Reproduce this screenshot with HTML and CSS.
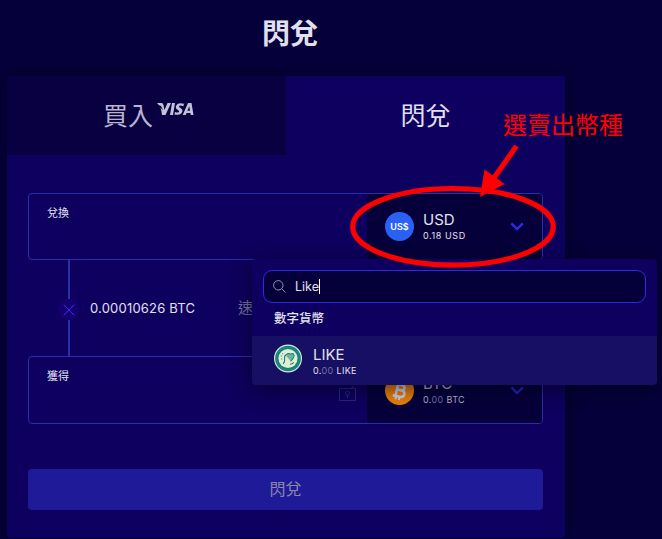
FILE: index.html
```html
<!DOCTYPE html>
<html lang="zh-Hant">
<head>
<meta charset="utf-8">
<title>閃兌</title>
<link rel="stylesheet" href="styles.css">
</head>
<body>
<h1 class="title">閃兌</h1>
<main class="card">
  <nav class="tabs">
    <div class="tab tab-buy"><span>買入</span>
      <svg class="visa" viewBox="0 0 38 14"><path d="M0 1H4.5Q6 1 6.5 3L7.5 8L10.5 1H14L8.5 13H5Q4.5 5 0 1Z"/><path d="M15 1H18L16 13H13Z"/><path d="M27 1.8L26.3 4.2Q22.4 2.7 22 4.5Q22 5.2 23.5 6Q26 7.3 25.3 9.5Q24 14 17.4 12.4L18 10Q21.8 11.3 22.2 9.5Q22.2 8.8 20.5 7.8Q18.3 6.5 19 4.1Q20.5 -.2 27 1.8Z"/><path fill-rule="evenodd" d="M31 1H34.5L36.5 13H33.7L33.4 11H29.6L28.7 13H25.7ZM32.3 4.2L30.4 8.8H33Z"/><path class="notch" d="M0 2.5L4 4L6 8L3.5 6Z"/></svg>
    </div>
    <div class="tab tab-active">閃兌</div>
  </nav>
  <section class="form">
    <div class="field">
      <div class="amount">兌換</div>
      <div class="currency">
        <span class="coin usd">US$</span>
        <div class="names"><b>USD</b><small>0.18 USD</small></div>
        <svg class="chevron" viewBox="0 0 14 9"><path d="M1.3 1.3L7 7L12.7 1.3"/></svg>
      </div>
    </div>
    <div class="rate">
      <div class="link"><i></i><span class="cross"><svg viewBox="0 0 12 12"><path d="M.7.7L11.3 11.3M11.3.7L.7 11.3"/></svg></span><i></i></div>
      <span class="price">0.00010626 BTC</span>
      <span class="speed">速</span>
    </div>
    <div class="field get">
      <div class="amount">獲得
        <svg class="lock" viewBox="0 0 17 17"><path d="M.5 4.5H16.5V16.5H.5ZM13 4V2.5H14V4"/><circle cx="8.5" cy="9.3" r="2"/><path d="M8.5 11.3V14"/></svg>
      </div>
      <div class="currency">
        <svg class="coin" viewBox="0 0 29 29"><circle cx="14.5" cy="14.5" r="14.5" fill="#e97f0a"/><g transform="rotate(13 14.5 14.5)" fill="none" stroke="#d4d2df"><path stroke-width="2.6" d="M9 8.5H15.5C20 8.5 20 14 15.5 14H11.5H16C21.5 14 21.5 20.5 16 20.5H9M11.8 8V21"/><path stroke-width="2" d="M12.5 5V8.5M16 5V8.5M12.5 20.5V24M16 20.5V24"/></g></svg>
        <div class="names"><b>BTC</b><small>0.<em>00</em> BTC</small></div>
        <svg class="chevron" viewBox="0 0 14 9"><path d="M1.3 1.3L7 7L12.7 1.3"/></svg>
      </div>
    </div>
    <div class="submit">閃兌</div>
  </section>
</main>
<aside class="dropdown">
  <div class="search">
    <svg viewBox="0 0 13 13"><circle cx="5.3" cy="5.3" r="4.7"/><path d="M8.8 8.8L12.5 12.5"/></svg>
    <span>Like</span><i class="caret"></i>
  </div>
  <div class="group">數字貨幣</div>
  <div class="option">
    <svg class="coin" viewBox="0 0 29 29"><circle cx="14.5" cy="14.5" r="13.9" fill="#117e80" stroke="#d3e8d0" stroke-width="1.2"/><circle cx="14.5" cy="14.5" r="11.8" fill="none" stroke="#4fa59b" stroke-width=".7" stroke-dasharray="1 1"/><circle cx="14.5" cy="14.5" r="9.9" fill="#e3eed0"/><path d="M13 10.5Q15 8.5 17 10Q19.5 8 20.8 11Q21 14 17.5 17L13 12.5Z" fill="#6fb0a0"/><path d="M9.5 20Q11.5 18 11 14.5Q10.5 11 13 10.3Q15 8.5 17 10Q20 8 20.8 11.2Q21 14 17 17.5M16.5 20.5Q19 20.5 20.5 18.5M7 12H8M8.5 9.5H9.5M7.5 15H8.5" fill="none" stroke="#167f80" stroke-width="1.1"/></svg>
    <div class="names"><b>LIKE</b><small>0.<em>00</em> LIKE</small></div>
  </div>
</aside>
<svg class="marks" viewBox="0 0 662 539"><ellipse cx="453" cy="226.8" rx="100.3" ry="38.3"/><path d="M516.5 146L491 182"/><path class="head" d="M484.5 169.5L504.5 184L480 197Z"/></svg>
<div class="note">選賣出幣種</div>
</body>
</html>
```
FILE: styles.css
```css
* { box-sizing: border-box; }
body {
  margin: 0;
  height: 539px;
  overflow: hidden;
  position: relative;
  background: #06003a;
  color: #e2e0ee;
  font-family: Inter, "Noto Sans CJK TC", sans-serif;
}
.title {
  margin: 0 0 0 7px;
  width: 566px;
  height: 76px;
  padding-top: 14px;
  font-size: 28px;
  line-height: 40px;
  font-weight: 700;
  text-align: center;
}
.card {
  width: 558px;
  height: 462px;
  margin-left: 7px;
  background: #0e005e;
  border-radius: 0 0 4px 4px;
  box-shadow: 0 0 20px rgba(0, 0, 20, .55);
}
.tabs { display: flex; height: 79px; }
.tab {
  width: 279px;
  display: flex;
  justify-content: center;
  align-items: center;
  padding-bottom: 4px;
  font-size: 25px;
}
.tab-buy { background: #080040; color: #b9b5cf; padding-left: 4px; }
.visa { width: 38px; height: 14px; margin: -9px -1px 0 4px; fill: #c4c0d8; }
.visa .notch { fill: #080040; }
.form { padding: 38px 22px 0 21px; }
.field {
  display: flex;
  height: 67px;
  border: 1px solid #2c2da9;
  border-radius: 4px;
}
.get { height: 68px; }
.amount {
  flex: 1;
  position: relative;
  padding: 11px 0 0 18px;
  font-size: 11px;
  line-height: 16px;
}
.lock {
  position: absolute;
  right: 11px;
  top: 27px;
  width: 17px;
  height: 17px;
  fill: none;
  stroke: #2c247f;
}
.currency {
  width: 175px;
  display: flex;
  align-items: center;
  padding: 0 18px;
  background: #06003a;
  border-radius: 3px;
}
.coin { width: 29px; height: 29px; flex: none; }
.usd {
  border-radius: 50%;
  background: #2a61f4;
  color: #fff;
  font: 600 9px/29px Inter, sans-serif;
  text-align: center;
}
.names { margin-left: 9px; display: flex; flex-direction: column; }
.names b { font-weight: 400; font-size: 15px; line-height: 18px; }
.names small { font-size: 9px; line-height: 12px; letter-spacing: .6px; margin-top: 1px; }
.get .names small, .option .names small { letter-spacing: .35px; }
.names em { font-style: normal; color: #7470a0; }
.chevron {
  width: 14px;
  height: 9px;
  margin-left: auto;
  fill: none;
  stroke: #3028ed;
  stroke-width: 2.4;
}
.get .chevron { stroke: #251fc0; }
.get .names { color: #b6b2ca; }
.rate { height: 96px; display: flex; align-items: center; padding-left: 30px; }
.link { display: flex; flex-direction: column; align-items: center; width: 21px; height: 96px; }
.link i { width: 2px; height: 39px; background: #2c2da9; }
.link i:last-child { height: 36px; }
.cross {
  width: 21px;
  height: 21px;
  display: grid;
  place-items: center;
  border-radius: 50%;
  background: #150070;
}
.cross svg { width: 12px; height: 12px; margin-top: 1px; stroke: #3b2cf4; }
.price { margin-left: 11px; width: 148px; font-size: 13px; letter-spacing: .2px; }
.speed { margin-top: -4px; font-size: 15px; color: #77739e; }
.submit {
  margin-top: 45px;
  height: 41px;
  border-radius: 4px;
  background: #1f1a98;
  color: #8b88a7;
  font-size: 16px;
  line-height: 41px;
  text-align: center;
}
.dropdown {
  position: absolute;
  left: 252px;
  top: 259px;
  width: 405px;
  height: 126px;
  padding-top: 11px;
  border-radius: 4px;
  overflow: hidden;
  background: #0e005e;
  box-shadow: 0 4px 20px rgba(0, 0, 20, .6);
}
.search {
  height: 33px;
  margin: 0 11px;
  padding-left: 9px;
  display: flex;
  align-items: center;
  border: 1px solid #3028e5;
  border-radius: 9px;
  background: #06003a;
  font-size: 12.5px;
}
.search svg { width: 13px; height: 13px; margin-right: 9px; fill: none; stroke: #9493b5; }
.caret { width: 1px; height: 15px; background: #fff; }
.group { height: 33px; padding-left: 22px; font-size: 12.5px; line-height: 31px; font-weight: 500; }
.option { height: 49px; padding: 0 22px; display: flex; align-items: center; background: #160f63; }
.option .coin { margin: -4px 0 0; width: 28px; }
.option .names { margin-left: 11px; padding-top: 2px; }
.option .names b { line-height: 17px; }
.option .names small { margin-top: 2px; }
.marks { position: absolute; left: 0; top: 0; width: 662px; height: 539px; fill: none; stroke: #f00; stroke-width: 5.2; }
.marks .head { fill: #f00; stroke: none; }
.note { position: absolute; left: 503px; top: 109px; color: #f00; font-size: 24px; line-height: 34px; white-space: nowrap; }
```
